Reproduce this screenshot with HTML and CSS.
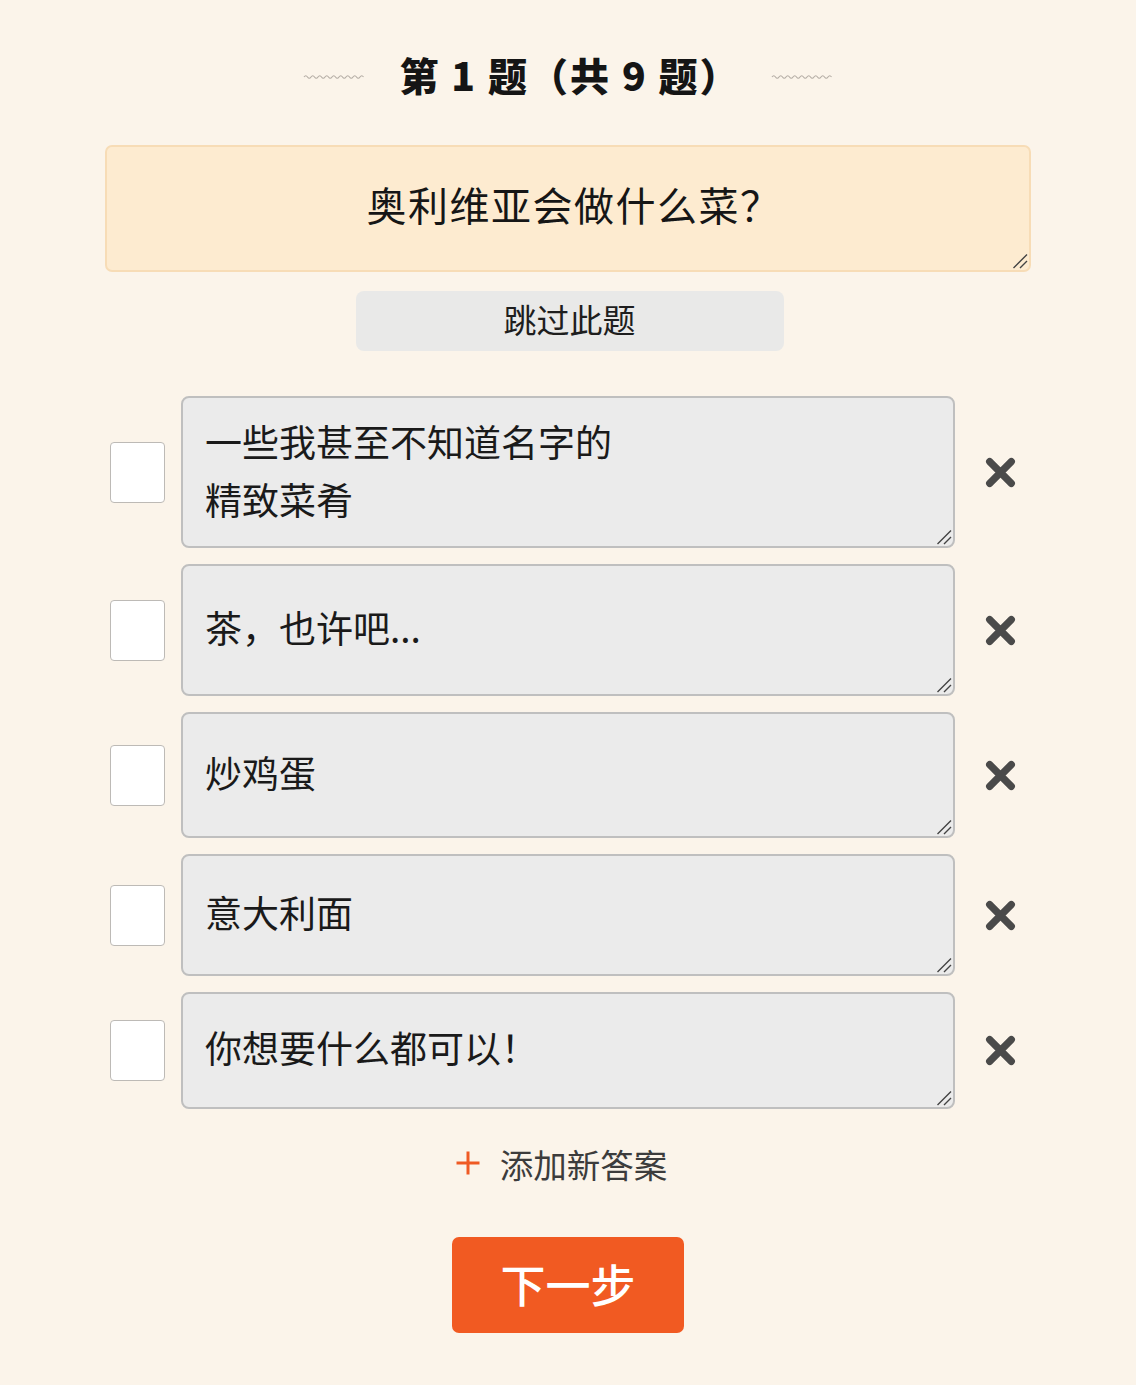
FILE: index.html
```html
<!DOCTYPE html>
<html lang="zh-CN">
<head>
<meta charset="utf-8">
<title>第 1 题</title>
<link rel="stylesheet" href="styles.css">
</head>
<body>
<main class="page">
  <header class="title-row">
    <svg class="wave" width="62" height="6" viewBox="0 0 62 6"><path d="M1 3 q1.75 -2.6 3.5 0 t3.5 0 t3.5 0 t3.5 0 t3.5 0 t3.5 0 t3.5 0 t3.5 0 t3.5 0 t3.5 0 t3.5 0 t3.5 0 t3.5 0 t3.5 0 t3.5 0 t3.5 0 t3.5 0" fill="none" stroke="#b3aca4" stroke-width="1.1"/></svg>
    <h1 class="title">第 1 题（共 9 题）</h1>
    <svg class="wave" width="62" height="6" viewBox="0 0 62 6"><path d="M1 3 q1.75 -2.6 3.5 0 t3.5 0 t3.5 0 t3.5 0 t3.5 0 t3.5 0 t3.5 0 t3.5 0 t3.5 0 t3.5 0 t3.5 0 t3.5 0 t3.5 0 t3.5 0 t3.5 0 t3.5 0 t3.5 0" fill="none" stroke="#b3aca4" stroke-width="1.1"/></svg>
  </header>

  <div class="box">
    <textarea class="question">奥利维亚会做什么菜？</textarea>
    <svg class="grip" width="16" height="16" viewBox="0 0 16 16"><path d="M1.5 15 L15 1.5 M8 15 L15 8" stroke="#444" stroke-width="1.4"/></svg>
  </div>

  <div class="skip-wrap"><button class="skip">跳过此题</button></div>

  <section class="answers">
    <div class="answer">
      <div class="check"></div>
      <div class="box">
        <textarea class="field field-1">一些我甚至不知道名字的
精致菜肴</textarea>
        <svg class="grip" width="16" height="16" viewBox="0 0 16 16"><path d="M1.5 15 L15 1.5 M8 15 L15 8" stroke="#444" stroke-width="1.4"/></svg>
      </div>
      <span class="remove"><svg width="33" height="33" viewBox="0 0 32 32"><path d="M5.5 5.5 L26.5 26.5 M26.5 5.5 L5.5 26.5" stroke="#4a4a4a" stroke-width="7" stroke-linecap="round"/></svg></span>
    </div>
    <div class="answer">
      <div class="check"></div>
      <div class="box">
        <textarea class="field field-2">茶，也许吧...</textarea>
        <svg class="grip" width="16" height="16" viewBox="0 0 16 16"><path d="M1.5 15 L15 1.5 M8 15 L15 8" stroke="#444" stroke-width="1.4"/></svg>
      </div>
      <span class="remove"><svg width="33" height="33" viewBox="0 0 32 32"><path d="M5.5 5.5 L26.5 26.5 M26.5 5.5 L5.5 26.5" stroke="#4a4a4a" stroke-width="7" stroke-linecap="round"/></svg></span>
    </div>
    <div class="answer">
      <div class="check"></div>
      <div class="box">
        <textarea class="field field-3">炒鸡蛋</textarea>
        <svg class="grip" width="16" height="16" viewBox="0 0 16 16"><path d="M1.5 15 L15 1.5 M8 15 L15 8" stroke="#444" stroke-width="1.4"/></svg>
      </div>
      <span class="remove"><svg width="33" height="33" viewBox="0 0 32 32"><path d="M5.5 5.5 L26.5 26.5 M26.5 5.5 L5.5 26.5" stroke="#4a4a4a" stroke-width="7" stroke-linecap="round"/></svg></span>
    </div>
    <div class="answer">
      <div class="check"></div>
      <div class="box">
        <textarea class="field field-4">意大利面</textarea>
        <svg class="grip" width="16" height="16" viewBox="0 0 16 16"><path d="M1.5 15 L15 1.5 M8 15 L15 8" stroke="#444" stroke-width="1.4"/></svg>
      </div>
      <span class="remove"><svg width="33" height="33" viewBox="0 0 32 32"><path d="M5.5 5.5 L26.5 26.5 M26.5 5.5 L5.5 26.5" stroke="#4a4a4a" stroke-width="7" stroke-linecap="round"/></svg></span>
    </div>
    <div class="answer">
      <div class="check"></div>
      <div class="box">
        <textarea class="field field-5">你想要什么都可以！</textarea>
        <svg class="grip" width="16" height="16" viewBox="0 0 16 16"><path d="M1.5 15 L15 1.5 M8 15 L15 8" stroke="#444" stroke-width="1.4"/></svg>
      </div>
      <span class="remove"><svg width="33" height="33" viewBox="0 0 32 32"><path d="M5.5 5.5 L26.5 26.5 M26.5 5.5 L5.5 26.5" stroke="#4a4a4a" stroke-width="7" stroke-linecap="round"/></svg></span>
    </div>
  </section>

  <div class="add">
    <svg class="plus" width="26" height="26" viewBox="0 0 26 26"><path d="M13 1.5 V24.5 M1.5 13 H24.5" stroke="#ef5a24" stroke-width="3"/></svg>
    <span>添加新答案</span>
  </div>

  <div class="next-wrap"><button class="next">下一步</button></div>
</main>
</body>
</html>
```

FILE: styles.css
```css
* { box-sizing: border-box; }

html, body {
  margin: 0;
  padding: 0;
  background: #fbf4ea;
}

body {
  font-family: "Noto Sans CJK SC", "Noto Sans", sans-serif;
  color: #1c1c1c;
}

.page {
  width: 926px;
  margin: 0 auto;
  padding-top: 46px;
  padding-bottom: 40px;
}

.title-row {
  display: flex;
  align-items: center;
  justify-content: center;
  gap: 30px;
  height: 56px;
}

.wave { display: block; margin-top: 6px; }

.title {
  margin: 0 0 0 4px;
  font-size: 39px;
  font-weight: 900;
  letter-spacing: 2px;
  line-height: 56px;
  color: #151515;
}

.box {
  position: relative;
  flex: none;
}

.grip {
  position: absolute;
  right: 3px;
  bottom: 3px;
  pointer-events: none;
}

.question {
  display: block;
  width: 926px;
  height: 127px;
  margin: 43px 0 0;
  padding: 29px 20px 0 32px;
  border: 2px solid #f7dcb6;
  border-radius: 7px;
  background: #fdebd0;
  font-family: inherit;
  font-size: 40px;
  letter-spacing: 1.5px;
  line-height: 56px;
  text-align: center;
  color: #161616;
  resize: none;
  overflow: hidden;
  outline: none;
}

.skip-wrap {
  display: flex;
  justify-content: center;
  margin-top: 19px;
}

.skip {
  width: 428px;
  height: 60px;
  border: none;
  border-radius: 8px;
  background: #e9e9e8;
  font-family: inherit;
  font-size: 33px;
  color: #1e1e1e;
  padding: 0 0 5px;
  margin-left: 3px;
}

.answers {
  display: flex;
  flex-direction: column;
  gap: 16px;
  margin-top: 45px;
}

.answer {
  display: flex;
  align-items: center;
}

.check {
  flex: none;
  width: 55px;
  height: 61px;
  margin-left: 5px;
  margin-right: 16px;
  background: #ffffff;
  border: 1.5px solid #bdbab6;
  border-radius: 4px;
}

.field {
  display: block;
  width: 774px;
  margin: 0;
  padding: 0 22px;
  border: 2px solid #bfbfbf;
  border-radius: 8px;
  background: #ebebeb;
  font-family: inherit;
  font-size: 37px;
  line-height: 58px;
  color: #1a1a1a;
  resize: none;
  overflow: hidden;
  outline: none;
}

.field-1 { height: 152px; padding-top: 14px; }
.field-2 { height: 132px; padding-top: 32px; }
.field-3 { height: 126px; padding-top: 29px; }
.field-4 { height: 122px; padding-top: 27px; }
.field-5 { height: 117px; padding-top: 24px; }

.remove {
  flex: none;
  display: flex;
  margin-left: 29px;
  width: 33px;
  height: 33px;
}

.add {
  display: flex;
  align-items: center;
  justify-content: center;
  gap: 19px;
  margin-top: 32px;
  height: 44px;
  font-size: 33.5px;
  color: #3c3c3c;
}

.plus { display: block; margin-left: -14px; }

.next-wrap {
  display: flex;
  justify-content: center;
  margin-top: 52px;
}

.next {
  width: 232px;
  height: 96px;
  border: none;
  border-radius: 7px;
  background: #f15a22;
  color: #ffffff;
  font-family: inherit;
  font-size: 45px;
  font-weight: 500;
  padding: 0 0 4px;
}
```
